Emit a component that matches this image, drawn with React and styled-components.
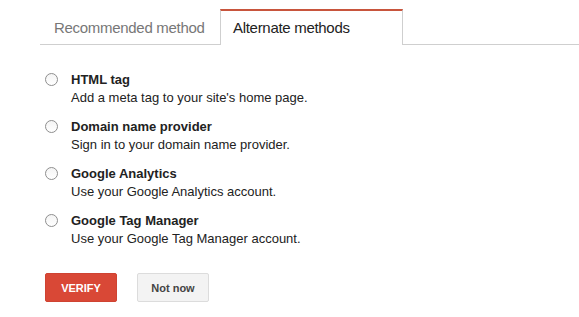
import React, { useState } from 'react';
import styled, { createGlobalStyle } from 'styled-components';

const GlobalStyle = createGlobalStyle`
  html, body {
    margin: 0;
    padding: 0;
    background: #fff;
    font-family: "Liberation Sans", Arial, sans-serif;
  }
`;

const Page = styled.div`
  padding-top: 9px;
`;

const TabBar = styled.div`
  display: flex;
  align-items: flex-end;
  margin-left: 40px;
  border-bottom: 1px solid #cfcfcf;
`;

const Tab = styled.div`
  box-sizing: border-box;
  flex-shrink: 0;
  white-space: nowrap;
  display: flex;
  align-items: center;
  font-size: 15px;
  letter-spacing: -0.3px;
  cursor: pointer;
  color: ${props => (props.active ? '#222' : '#777')};
  width: ${props => props.width}px;
  padding-left: ${props => (props.active ? 12 : 13)}px;
  padding-bottom: 1px;
  background: #fff;
  border: 1px solid ${props => (props.active ? '#cfcfcf' : 'transparent')};
  border-top: 2px solid ${props => (props.active ? '#c8553d' : 'transparent')};
  border-bottom: none;
  margin-bottom: ${props => (props.active ? '-1px' : '0')};
  height: ${props => (props.active ? 36 : 35)}px;
`;

const OptionList = styled.div`
  display: flex;
  flex-direction: column;
  gap: 11px;
  padding: 26px 0 0 45px;
`;

const Option = styled.label`
  display: flex;
  align-items: flex-start;
  cursor: pointer;
`;

const Radio = styled.span`
  box-sizing: border-box;
  width: 13px;
  height: 13px;
  margin-top: 2px;
  margin-right: 13px;
  border-radius: 50%;
  border: 1px solid #8e8e8e;
  background: linear-gradient(#f4f4f4, #fff);
  display: flex;
  align-items: center;
  justify-content: center;

  &::after {
    content: '';
    width: 5px;
    height: 5px;
    border-radius: 50%;
    background: ${props => (props.checked ? '#333' : 'transparent')};
  }
`;

const OptionText = styled.div`
  display: flex;
  flex-direction: column;
  font-size: 13px;
  line-height: 18px;
  color: #222;
`;

const Title = styled.span`
  font-weight: bold;
  color: #222;
`;

const Desc = styled.span`
  color: #222;
`;

const Actions = styled.div`
  display: flex;
  gap: 20px;
  padding: 25px 0 0 45px;
`;

const Button = styled.button`
  box-sizing: border-box;
  width: 72px;
  height: 29px;
  border-radius: 2px;
  font-family: "Liberation Sans", Arial, sans-serif;
  font-size: 11px;
  font-weight: bold;
  cursor: pointer;
  background: ${props => (props.primary ? '#d94836' : '#f3f3f3')};
  color: ${props => (props.primary ? '#fff' : '#444')};
  border: 1px solid ${props => (props.primary ? '#cf4332' : '#dcdcdc')};
  text-transform: ${props => (props.primary ? 'uppercase' : 'none')};
  padding: 0;
`;

const methods = [
  { id: 'html', title: 'HTML tag', desc: "Add a meta tag to your site's home page." },
  { id: 'dns', title: 'Domain name provider', desc: 'Sign in to your domain name provider.' },
  { id: 'ga', title: 'Google Analytics', desc: 'Use your Google Analytics account.' },
  { id: 'gtm', title: 'Google Tag Manager', desc: 'Use your Google Tag Manager account.' },
];

const App = () => {
  const [selected, setSelected] = useState(null);

  return (
    <Page>
      <GlobalStyle />
      <TabBar>
        <Tab width={180}>Recommended method</Tab>
        <Tab active width={183}>Alternate methods</Tab>
      </TabBar>

      <OptionList>
        {methods.map(m => (
          <Option key={m.id} onClick={() => setSelected(m.id)}>
            <Radio checked={selected === m.id} />
            <OptionText>
              <Title>{m.title}</Title>
              <Desc>{m.desc}</Desc>
            </OptionText>
          </Option>
        ))}
      </OptionList>

      <Actions>
        <Button primary>Verify</Button>
        <Button>Not now</Button>
      </Actions>
    </Page>
  );
};

export default App;
